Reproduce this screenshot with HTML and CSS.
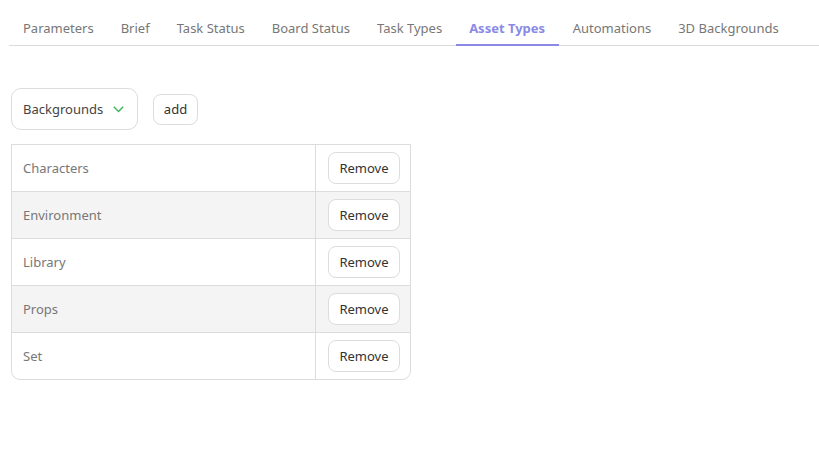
FILE: index.html
```html
<!DOCTYPE html>
<html>
<head>
<meta charset="utf-8">
<link rel="stylesheet" href="styles.css">
</head>
<body>
<div class="page">
  <nav class="tabs">
    <a class="tab">Parameters</a>
    <a class="tab">Brief</a>
    <a class="tab">Task Status</a>
    <a class="tab">Board Status</a>
    <a class="tab">Task Types</a>
    <a class="tab active">Asset Types</a>
    <a class="tab">Automations</a>
    <a class="tab">3D Backgrounds</a>
  </nav>
  <div class="toolbar">
    <div class="select">
      <span>Backgrounds</span>
      <svg class="chev" width="11" height="7" viewBox="0 0 11 7"><path d="M0.8 0.8 L5.5 5.5 L10.2 0.8" fill="none" stroke="#3cb55a" stroke-width="1.4"/></svg>
    </div>
    <button class="btn add">add</button>
  </div>
  <table class="types">
    <tr><td class="name">Characters</td><td class="act"><button class="btn">Remove</button></td></tr>
    <tr><td class="name">Environment</td><td class="act"><button class="btn">Remove</button></td></tr>
    <tr><td class="name">Library</td><td class="act"><button class="btn">Remove</button></td></tr>
    <tr><td class="name">Props</td><td class="act"><button class="btn">Remove</button></td></tr>
    <tr><td class="name">Set</td><td class="act"><button class="btn">Remove</button></td></tr>
  </table>
</div>
</body>
</html>
```
FILE: styles.css
```css
* { box-sizing: border-box; }
html, body { margin: 0; background: #fff; }
body {
  font-family: "Noto Sans", "Open Sans", sans-serif;
  font-size: 13px;
  color: #333;
}
.page { padding: 7px 0 0 9px; }
.tabs {
  display: flex;
  border-bottom: 1px solid #dcdcdc;
}
.tab {
  padding: 11px 13.5px 6px;
  line-height: 20px;
  color: #777;
  border-bottom: 2px solid transparent;
  margin-bottom: -1px;
  white-space: nowrap;
}
.tab:first-child { padding-left: 14px; }
.tab.active {
  color: #8a8ae6;
  font-weight: 700;
  padding-right: 14px;
  border-bottom-color: #8a8ae6;
}
.toolbar {
  display: flex;
  align-items: center;
  gap: 15px;
  margin: 42px 0 0 2px;
}
.select {
  display: flex;
  align-items: center;
  justify-content: space-between;
  width: 127px;
  height: 42px;
  padding: 0 13px 0 11px;
  border: 1px solid #dcdcdc;
  border-radius: 10px;
  color: #444;
}
.chev { margin-top: 1px; }
.btn {
  font-family: inherit;
  font-size: 13px;
  color: #333;
  background: #fff;
  border: 1px solid #dcdcdc;
  border-radius: 8px;
  padding: 0;
  height: 31px;
  cursor: pointer;
}
.add { width: 45px; }
.types {
  margin: 14px 0 0 2px;
  width: 400px;
  border-collapse: separate;
  border-spacing: 0;
  border: 1px solid #dcdcdc;
  border-radius: 0 0 9px 9px;
  overflow: hidden;
}
.types td {
  height: 47px;
  border-top: 1px solid #dcdcdc;
  padding: 0;
}
.types tr:first-child td { border-top: none; height: 46px; }
.types tr:nth-child(even) td { background: #f4f4f4; }
.name {
  color: #777;
  padding-left: 11px !important;
  border-right: 1px solid #dcdcdc;
}
.act {
  width: 94px;
  text-align: right;
  padding-right: 10px !important;
}
.act .btn { width: 72px; height: 32px; vertical-align: middle; }
```
